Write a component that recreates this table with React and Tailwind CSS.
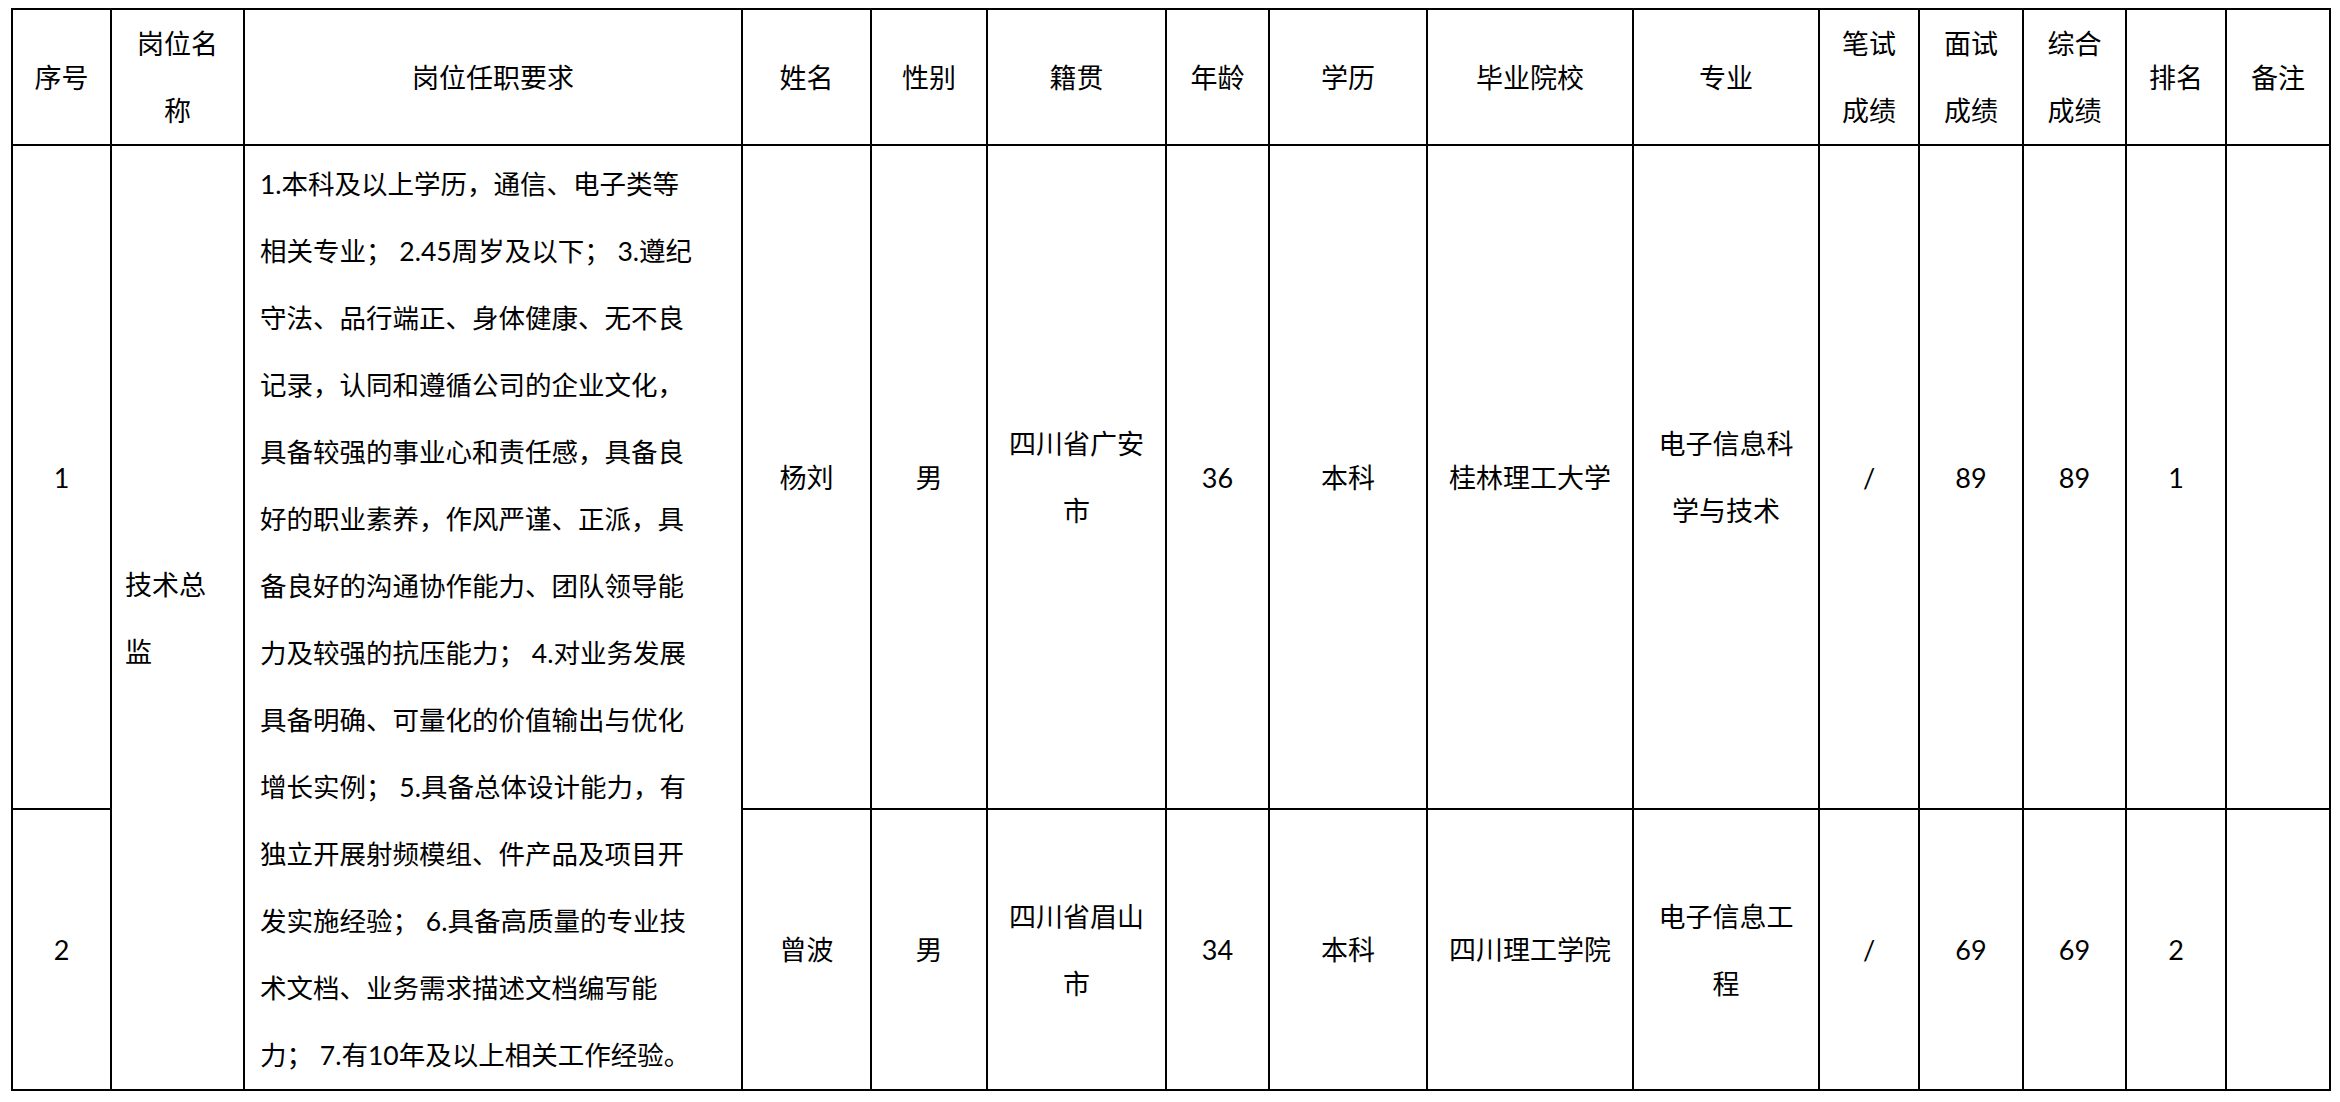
import React from 'react';

const cols = [
  'w-[99px]', 'w-[133px]', 'w-[498px]', 'w-[129px]', 'w-[116px]', 'w-[179px]', 'w-[103px]', 'w-[158px]',
  'w-[206px]', 'w-[186px]', 'w-[100px]', 'w-[104px]', 'w-[103px]', 'w-[100px]', 'w-[104px]',
];

const headers = [
  ['序号'], ['岗位名', '称'], ['岗位任职要求'], ['姓名'], ['性别'], ['籍贯'], ['年龄'], ['学历'],
  ['毕业院校'], ['专业'], ['笔试', '成绩'], ['面试', '成绩'], ['综合', '成绩'], ['排名'], ['备注'],
];

const requirement = [
  '1.本科及以上学历，通信、电子类等',
  '相关专业； 2.45周岁及以下； 3.遵纪',
  '守法、品行端正、身体健康、无不良',
  '记录，认同和遵循公司的企业文化，',
  '具备较强的事业心和责任感，具备良',
  '好的职业素养，作风严谨、正派，具',
  '备良好的沟通协作能力、团队领导能',
  '力及较强的抗压能力； 4.对业务发展',
  '具备明确、可量化的价值输出与优化',
  '增长实例； 5.具备总体设计能力，有',
  '独立开展射频模组、件产品及项目开',
  '发实施经验； 6.具备高质量的专业技',
  '术文档、业务需求描述文档编写能',
  '力； 7.有10年及以上相关工作经验。',
];

const rows = [
  {
    no: '1', name: '杨刘', sex: '男', origin: ['四川省广安', '市'], age: '36', edu: '本科',
    school: ['桂林理工大学'], major: ['电子信息科', '学与技术'], written: '/', interview: '89', total: '89', rank: '1',
  },
  {
    no: '2', name: '曾波', sex: '男', origin: ['四川省眉山', '市'], age: '34', edu: '本科',
    school: ['四川理工学院'], major: ['电子信息工', '程'], written: '/', interview: '69', total: '69', rank: '2',
  },
];

const cell = 'border-2 border-black text-center align-middle px-2';

const Lines = ({ lines }) => lines.map((l, i) => <div key={i} className="whitespace-nowrap">{l}</div>);

export default function App() {
  return (
    <div className="w-[2340px] h-[1102px] bg-white text-black pt-[8px] pl-[11px] font-['Lato','Noto_Sans_CJK_SC',sans-serif] text-[27px] leading-[67px]">
      <table className="table-fixed border-collapse border-2 border-black w-[2320px]">
        <colgroup>
          {cols.map((c, i) => <col key={i} className={c} />)}
        </colgroup>
        <tbody>
          <tr className="h-[136px]">
            {headers.map((h, i) => (
              <td key={i} className={cell}><Lines lines={h} /></td>
            ))}
          </tr>
          {rows.map((r, idx) => (
            <tr key={r.no} className={idx === 0 ? 'h-[663px]' : 'h-[280px]'}>
              <td className={cell}>{r.no}</td>
              {idx === 0 && (
                <>
                  <td rowSpan={2} className="border-2 border-black align-middle text-left pl-[13px]">
                    <div>技术总</div>
                    <div>监</div>
                  </td>
                  <td rowSpan={2} className="border-2 border-black align-top text-left pl-[15px] pt-[5px] text-[26.5px]">
                    <Lines lines={requirement} />
                  </td>
                </>
              )}
              <td className={cell}>{r.name}</td>
              <td className={cell}>{r.sex}</td>
              <td className={cell}><Lines lines={r.origin} /></td>
              <td className={cell}>{r.age}</td>
              <td className={cell}>{r.edu}</td>
              <td className={cell}><Lines lines={r.school} /></td>
              <td className={cell}><Lines lines={r.major} /></td>
              <td className={cell}>{r.written}</td>
              <td className={cell}>{r.interview}</td>
              <td className={cell}>{r.total}</td>
              <td className={cell}>{r.rank}</td>
              <td className={cell}></td>
            </tr>
          ))}
        </tbody>
      </table>
    </div>
  );
}
